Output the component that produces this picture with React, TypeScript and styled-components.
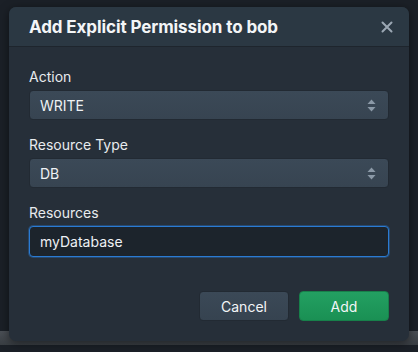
import React from "react";
import styled, {createGlobalStyle} from "styled-components";

const GlobalStyle = createGlobalStyle`
    html, body {
        margin: 0;
        padding: 0;
        background: #1b2027;
        font-family: Inter, "Noto Sans", "Liberation Sans", sans-serif;
        -webkit-font-smoothing: antialiased;
    }
`

const Page = styled.div`
    position: relative;
    width: 418px;
    height: 352px;
    overflow: hidden;
    display: flex;
    flex-direction: column;
    justify-content: flex-end;
    padding-bottom: 7px;
    box-sizing: border-box;
    background: #1b2027;
`

const BackdropBar = styled.div`
    height: 14px;
    background: linear-gradient(#50555b, #3c4146);
    opacity: 0.9;
`

const Modal = styled.div`
    position: absolute;
    top: 7px;
    left: 9px;
    width: 400px;
    height: 334px;
    display: flex;
    flex-direction: column;
    background: #262f39;
    border-radius: 7px;
    box-shadow: 0 2px 10px rgba(0, 0, 0, 0.5);
    overflow: hidden;
`

const Header = styled.div`
    height: 40px;
    display: flex;
    align-items: center;
    justify-content: space-between;
    padding: 0 15px 0 20px;
    background: #2b3843;
    border-bottom: 1px solid #1e252d;
    box-sizing: border-box;
`

const Title = styled.h2`
    margin: 0;
    font-size: 17px;
    font-weight: 700;
    color: #f3f5f7;
    letter-spacing: -0.1px;
`

const CloseButton = styled.button`
    border: none;
    background: none;
    padding: 0;
    width: 14px;
    height: 14px;
    display: flex;
    align-items: center;
    justify-content: center;
    cursor: pointer;
`

const Body = styled.div`
    padding: 21px 20px 0;
    display: flex;
    flex-direction: column;
    gap: 16px;
`

const Field = styled.div`
    display: flex;
    flex-direction: column;
`

const Label = styled.label`
    font-size: 14px;
    line-height: 17px;
    color: #e8ebee;
    margin-bottom: 5px;
`

const SelectBox = styled.div`
    height: 30px;
    display: flex;
    align-items: center;
    justify-content: space-between;
    padding: 0 12px 0 10px;
    background: linear-gradient(#3b4957, #374451);
    border: 1px solid #222a33;
    border-radius: 4px;
    box-sizing: border-box;
    font-size: 14px;
    color: #eef1f4;
`

const TextInput = styled.input`
    height: 31px;
    padding: 0 10px;
    background: #1c242c;
    border: 1px solid #2a7bd3;
    border-radius: 4px;
    box-shadow: 0 0 0 1px rgba(42, 123, 211, 0.35);
    box-sizing: border-box;
    font-family: inherit;
    font-size: 14px;
    color: #eef1f4;
    outline: none;
`

const Footer = styled.div`
    margin-top: auto;
    padding: 0 20px 20px;
    display: flex;
    justify-content: flex-end;
    gap: 10px;
`

const Button = styled.button<{ $primary?: boolean }>`
    width: 90px;
    height: 30px;
    border-radius: 4px;
    font-family: inherit;
    font-size: 14px;
    color: #f3f5f7;
    cursor: pointer;
    border: 1px solid ${p => p.$primary ? "#17804a" : "#222a33"};
    background: ${p => p.$primary
        ? "linear-gradient(#23a062, #1a9054)"
        : "linear-gradient(#3b4957, #364350)"};
`

const SortIcon = () => (
    <svg width="9" height="13" viewBox="0 0 9 13">
        <path d="M4.5 0.5 L8.5 5 H0.5 Z" fill="#8b99a7"/>
        <path d="M4.5 12.5 L8.5 8 H0.5 Z" fill="#8b99a7"/>
    </svg>
)

const Select: React.FC<{ value: string }> = ({value}) => (
    <SelectBox>
        <span>{value}</span>
        <SortIcon/>
    </SelectBox>
)

export default function App() {
    return (
        <Page>
            <GlobalStyle/>
            <BackdropBar/>
            <Modal>
                <Header>
                    <Title>Add Explicit Permission to bob</Title>
                    <CloseButton aria-label="Close">
                        <svg width="12" height="12" viewBox="0 0 12 12">
                            <path d="M1.5 1.5 L10.5 10.5 M10.5 1.5 L1.5 10.5" stroke="#9ba7b3" strokeWidth="2" strokeLinecap="round"/>
                        </svg>
                    </CloseButton>
                </Header>
                <Body>
                    <Field>
                        <Label>Action</Label>
                        <Select value="WRITE"/>
                    </Field>
                    <Field>
                        <Label>Resource Type</Label>
                        <Select value="DB"/>
                    </Field>
                    <Field>
                        <Label>Resources</Label>
                        <TextInput defaultValue="myDatabase"/>
                    </Field>
                </Body>
                <Footer>
                    <Button>Cancel</Button>
                    <Button $primary>Add</Button>
                </Footer>
            </Modal>
        </Page>
    )
}
